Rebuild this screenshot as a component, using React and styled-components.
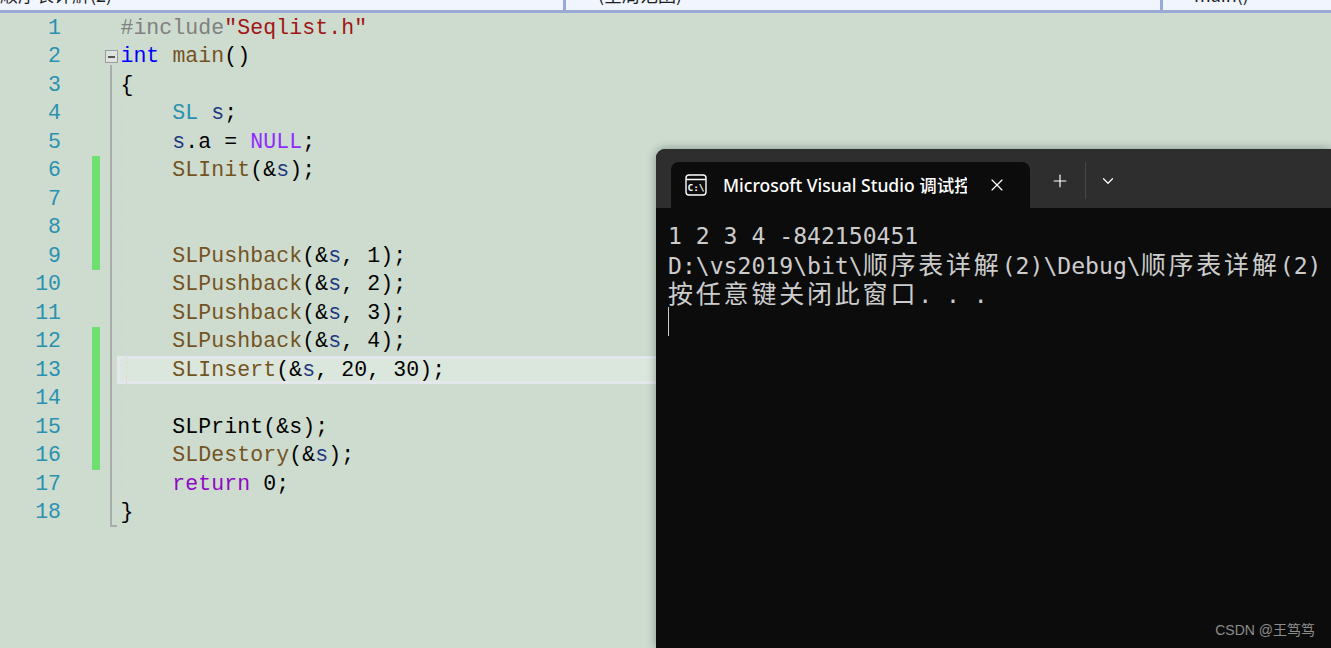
import styled, { createGlobalStyle } from 'styled-components';
import { X, Plus, ChevronDown } from 'lucide-react';

const GlobalStyle = createGlobalStyle`
  html, body {
    margin: 0;
    padding: 0;
    background: #cddccf;
  }
`;

const Page = styled.div`
  position: relative;
  width: 1331px;
  height: 648px;
  overflow: hidden;
  background: #cddccf;
`;

const NavBar = styled.div`
  display: grid;
  grid-template-columns: 563px 594px 1fr;
  gap: 3px;
  height: 13px;
  box-sizing: border-box;
  border-bottom: 3px solid #9aaad4;
  background: #9aaad4;
  overflow: hidden;
`;

const NavCell = styled.div`
  display: flex;
  align-items: flex-end;
  padding-left: ${(props) => props.$indent || 0}px;
  height: 10px;
  background: #f1f5fe;
  overflow: hidden;
  font: 18px/24px 'Noto Sans CJK SC', sans-serif;
  color: #1e1e1e;
  white-space: nowrap;
`;

const NavText = styled.span`
  display: block;
  margin-bottom: 4px;
`;

const Editor = styled.div`
  padding-top: 0.5px;
  font-family: 'Liberation Mono', monospace;
  font-size: 21.5px;
`;

const Row = styled.div`
  display: grid;
  grid-template-columns: 61px 31px 8px 17px 1fr;
  height: 28.5px;
  line-height: 28.5px;
`;

const LineNumber = styled.div`
  text-align: right;
  color: #2b91af;
`;

const Marker = styled.div`
  grid-column: 3;
  background: ${(props) => (props.$on ? '#6ee06f' : 'transparent')};
  box-shadow: ${(props) => (props.$on ? 'inset 0 -1px 0 #78dc7a' : 'none')};
`;

const FoldCell = styled.div`
  grid-column: 4;
  position: relative;

  &::before {
    content: '';
    display: ${(props) => (props.$mode === 'none' ? 'none' : 'block')};
    position: absolute;
    left: 10px;
    top: ${(props) => (props.$mode === 'start' ? 23 : 0)}px;
    bottom: ${(props) => (props.$mode === 'end' ? 2 : 0)}px;
    width: 2px;
    background: #a8adab;
  }

  &::after {
    content: '';
    display: ${(props) => (props.$mode === 'end' ? 'block' : 'none')};
    position: absolute;
    left: 10px;
    bottom: 0;
    width: 7px;
    height: 2px;
    background: #a8adab;
  }
`;

const FoldBox = styled.div`
  position: absolute;
  left: 5px;
  top: 8px;
  width: 13px;
  height: 13px;
  box-sizing: border-box;
  border: 1px solid #9a9f9d;
  background: #dfe3e0;
  display: flex;
  align-items: center;
  justify-content: center;

  &::before {
    content: '';
    width: 7px;
    height: 2px;
    background: #555;
  }
`;

const Code = styled.div`
  position: relative;
  grid-column: 5;
  padding-left: 3.4px;
  white-space: pre;
  color: #000;
  letter-spacing: 0.09px;
  box-sizing: border-box;

  ${(props) =>
    props.$current &&
    `
    background: #dbe7dc;
    box-shadow: inset 0 0 0 3px #e4e8ec;
  `}

  ${(props) =>
    props.$guide &&
    `
    &::before {
      content: '';
      position: absolute;
      left: 9px;
      top: 0;
      bottom: 0;
      border-left: 1px dashed #dcd8dc;
    }
  `}
`;

const Tok = styled.span`
  color: ${(props) => props.$c};
`;

const colors = {
  pre: '#808080',
  str: '#a31515',
  kw: '#0000ff',
  fn: '#74531f',
  id: '#1f377f',
  type: '#2b91af',
  mac: '#8f2bff',
  ret: '#8f08c4',
};

const call = (name, rest) => [
  '    ',
  [name, 'fn'],
  '(&',
  ['s', 'id'],
  rest,
];

const lines = [
  { code: [['#include', 'pre'], ['"Seqlist.h"', 'str']], fold: 'none' },
  { code: [['int', 'kw'], ' ', ['main', 'fn'], '()'], fold: 'start' },
  { code: ['{'] },
  { code: ['    ', ['SL', 'type'], ' ', ['s', 'id'], ';'], guide: true },
  { code: ['    ', ['s', 'id'], '.a = ', ['NULL', 'mac'], ';'], guide: true },
  { code: call('SLInit', ');'), guide: true, mark: true },
  { code: [], guide: true, mark: true },
  { code: [], guide: true, mark: true },
  { code: call('SLPushback', ', 1);'), guide: true, mark: true },
  { code: call('SLPushback', ', 2);'), guide: true },
  { code: call('SLPushback', ', 3);'), guide: true },
  { code: call('SLPushback', ', 4);'), guide: true, mark: true },
  { code: call('SLInsert', ', 20, 30);'), guide: true, mark: true, current: true },
  { code: [], guide: true, mark: true },
  { code: ['    SLPrint(&s);'], guide: true, mark: true },
  { code: call('SLDestory', ');'), guide: true, mark: true },
  { code: ['    ', ['return', 'ret'], ' 0;'], guide: true },
  { code: ['}'], fold: 'end' },
];

const Terminal = styled.section`
  position: absolute;
  left: 656px;
  top: 149px;
  right: 0;
  bottom: 0;
  border-radius: 9px 0 0 0;
  background: #0c0c0c;
  box-shadow: 0 0 10px rgba(40, 50, 45, 0.45);
  overflow: hidden;
`;

const TitleBar = styled.header`
  display: flex;
  align-items: flex-end;
  height: 59px;
  padding-left: 15px;
  background: #2e2e2e;
  color: #fff;
`;

const Tab = styled.div`
  display: flex;
  align-items: center;
  width: 359px;
  height: 46px;
  box-sizing: border-box;
  padding-left: 14px;
  background: #0c0c0c;
  border-radius: 8px 8px 0 0;
`;

const TabTitle = styled.div`
  width: 244px;
  margin-left: 16px;
  overflow: hidden;
  white-space: nowrap;
  font: 500 17.5px/24px 'Noto Sans', 'Noto Sans CJK SC', sans-serif;
`;

const TabClose = styled.div`
  display: flex;
  margin-left: 20px;
`;

const TitleActions = styled.div`
  display: flex;
  align-items: center;
  align-self: stretch;
  padding-top: 4px;
  padding-left: 20px;
`;

const Divider = styled.div`
  width: 1px;
  height: 37px;
  margin: 0 13px 0 15px;
  background: #474747;
`;

const Output = styled.div`
  padding: 14px 0 0 12px;
  color: #cccccc;
  font-family: 'DejaVu Sans Mono', monospace;
  font-size: 23.1px;
  white-space: pre;
`;

const OutputLine = styled.div`
  height: 29.5px;
  line-height: 29.5px;
`;

const Cjk = styled.span`
  font-family: 'Noto Sans CJK SC', sans-serif;
  font-size: 25px;
  line-height: 0;
  letter-spacing: 2.8px;
`;

const Cursor = styled.div`
  width: 1px;
  height: 29px;
  margin-top: -3.5px;
  background: #cccccc;
`;

const Watermark = styled.div`
  position: absolute;
  right: 16px;
  bottom: 10px;
  color: #8c8c8c;
  font: 14px/16px 'Liberation Sans', 'Noto Sans CJK SC', sans-serif;
`;

const ConsoleIcon = () => (
  <svg width="22" height="22" viewBox="0 0 22 22" fill="none">
    <rect x="1" y="1" width="20" height="20" rx="3" stroke="#fff" strokeWidth="1.4" />
    <path d="M1 5.5h20" stroke="#fff" strokeWidth="1.4" />
    <text x="11" y="16.5" textAnchor="middle" fill="#fff" fontSize="9.5" fontWeight="700" fontFamily="'DejaVu Sans Mono', monospace">
      C:\
    </text>
  </svg>
);

export default function App() {
  return (
    <Page>
      <GlobalStyle />
      <NavBar>
        <NavCell><NavText>顺序表详解(2)</NavText></NavCell>
        <NavCell $indent={32}><NavText>(全局范围)</NavText></NavCell>
        <NavCell $indent={31}><NavText>main()</NavText></NavCell>
      </NavBar>
      <Editor>
        {lines.map((line, i) => (
          <Row key={i}>
            <LineNumber>{i + 1}</LineNumber>
            <Marker $on={line.mark} />
            <FoldCell $mode={line.fold}>
              {line.fold === 'start' && <FoldBox />}
            </FoldCell>
            <Code $guide={line.guide} $current={line.current}>
              {line.code.map((part, j) =>
                Array.isArray(part) ? (
                  <Tok key={j} $c={colors[part[1]]}>{part[0]}</Tok>
                ) : (
                  part
                ),
              )}
              {line.code.length === 0 && ' '}
            </Code>
          </Row>
        ))}
      </Editor>
      <Terminal>
        <TitleBar>
          <Tab>
            <ConsoleIcon />
            <TabTitle>Microsoft Visual Studio 调试控制台</TabTitle>
            <TabClose><X size={20} strokeWidth={1.4} /></TabClose>
          </Tab>
          <TitleActions>
            <Plus size={20} strokeWidth={1.4} />
            <Divider />
            <ChevronDown size={18} strokeWidth={1.6} />
          </TitleActions>
        </TitleBar>
        <Output>
          <OutputLine>1 2 3 4 -842150451</OutputLine>
          <OutputLine>D:\vs2019\bit\<Cjk>顺序表详解</Cjk>(2)\Debug\<Cjk>顺序表详解</Cjk>(2)</OutputLine>
          <OutputLine><Cjk>按任意键关闭此窗口</Cjk>. . .</OutputLine>
          <Cursor />
        </Output>
        <Watermark>CSDN @王笃笃</Watermark>
      </Terminal>
    </Page>
  );
}
